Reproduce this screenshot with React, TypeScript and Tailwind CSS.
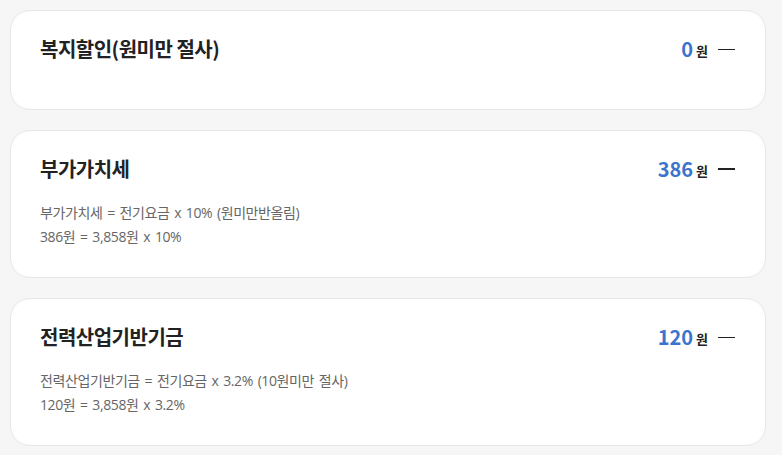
const items = [
  { title: "복지할인(원미만 절사)", amount: "0", thick: false, lines: [] as string[] },
  {
    title: "부가가치세",
    amount: "386",
    thick: true,
    lines: ["부가가치세 = 전기요금 x 10% (원미만반올림)", "386원 = 3,858원 x 10%"],
  },
  {
    title: "전력산업기반기금",
    amount: "120",
    thick: false,
    lines: ["전력산업기반기금 = 전기요금 x 3.2% (10원미만 절사)", "120원 = 3,858원 x 3.2%"],
  },
];

export default function App() {
  return (
    <div
      className="min-h-[455px] bg-[#f6f6f6] pl-[10px] pr-[16px] pt-[10px] pb-[8px] flex flex-col gap-[20px]"
      style={{ fontFamily: '"Noto Sans CJK KR", "Noto Sans", sans-serif' }}
    >
      {items.map((item) => (
        <div
          key={item.title}
          className="bg-white border border-[#e6e6e6] rounded-[20px] px-[29px] pt-[24px] pb-[28px] min-h-[100px]"
        >
          <div className="flex items-center justify-between h-[28px]">
            <h3 className="text-[20px] font-bold text-[#222] tracking-[-0.5px]">{item.title}</h3>
            <div className="flex items-center">
              <span className="text-[20px] font-bold text-[#3a74cf] leading-none">{item.amount}</span>
              <span className="ml-[3px] text-[13px] font-bold text-[#222] leading-none mt-[2px]">원</span>
              <span
                className={`ml-[10px] mr-[1px] w-[17px] bg-[#222] ${item.thick ? "h-[2px]" : "h-px"}`}
              />
            </div>
          </div>
          {item.lines.length > 0 && (
            <div
              className="mt-[18px] text-[14px] leading-[24px] text-[#666] tracking-[-0.4px] [word-spacing:1.5px]"
              style={{ fontFamily: '"Open Sans", "Noto Sans CJK KR", sans-serif' }}
            >
              {item.lines.map((l) => (
                <p key={l}>{l}</p>
              ))}
            </div>
          )}
        </div>
      ))}
    </div>
  );
}
